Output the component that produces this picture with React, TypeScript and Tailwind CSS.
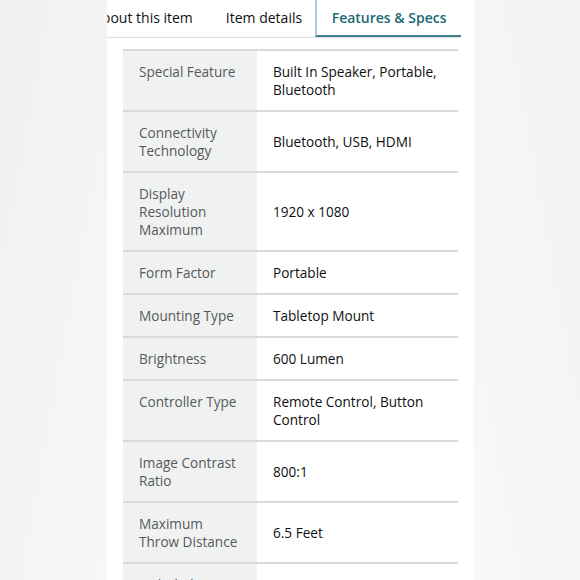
const specs: [string, string][] = [
  ['Special Feature', 'Built In Speaker, Portable, Bluetooth'],
  ['Connectivity Technology', 'Bluetooth, USB, HDMI'],
  ['Display Resolution Maximum', '1920 x 1080'],
  ['Form Factor', 'Portable'],
  ['Mounting Type', 'Tabletop Mount'],
  ['Brightness', '600 Lumen'],
  ['Controller Type', 'Remote Control, Button Control'],
  ['Image Contrast Ratio', '800:1'],
  ['Maximum Throw Distance', '6.5 Feet'],
  ['Included Components', 'Remote'],
]

const labelWidths: Record<string, string> = {
  'Connectivity Technology': 'w-[100px]',
  'Display Resolution Maximum': 'w-[90px]',
  'Image Contrast Ratio': 'w-[100px]',
  'Maximum Throw Distance': 'w-[104px]',
}

export default function App() {
  return (
    <div
      className="flex h-[580px] w-[580px] overflow-hidden bg-[#f4f4f4]"
      style={{ fontFamily: '"Open Sans", "Noto Sans", sans-serif' }}
    >
      <div className="w-[107px] shrink-0 bg-gradient-to-br from-[#f0f0f0] to-[#f7f7f7]" />
      <div className="w-[367px] shrink-0 overflow-hidden bg-white">
        <div className="flex h-[38px] w-[353px] items-stretch border-b border-[#dcdfe0] text-[14px] text-[#0f1111]">
          <div className="-ml-[30px] flex shrink-0 items-center px-4 pb-[3px]">About this item</div>
          <div className="flex shrink-0 items-center pb-[3px] pl-[17px] pr-[13px]">Item details</div>
          <div className="flex w-[146px] shrink-0 items-center justify-center border-b-2 border-l-2 border-b-[#3f7f8c] border-l-[#a8c6e6] pb-[1px] font-semibold text-[#1b6a78]">
            Features &amp; Specs
          </div>
        </div>
        <div className="ml-4 mt-[11px] w-[335px] border-t-2 border-[#d7dada] text-[13.6px] leading-[18px]">
          {specs.map(([label, value]) => (
            <div key={label} className="flex border-b-2 border-[#d7dada]">
              <div className="w-[134px] shrink-0 bg-[#f0f2f2] py-[11.5px] pl-4 pr-2 text-[#565959]">
                <div className={labelWidths[label] ?? ''}>{label}</div>
              </div>
              <div className="flex flex-1 items-center py-[11.5px] pl-4 pr-4 text-[#0f1111]">{value}</div>
            </div>
          ))}
        </div>
      </div>
      <div className="flex-1 bg-gradient-to-bl from-[#f2f2f2] to-[#f8f8f8]" />
    </div>
  )
}
